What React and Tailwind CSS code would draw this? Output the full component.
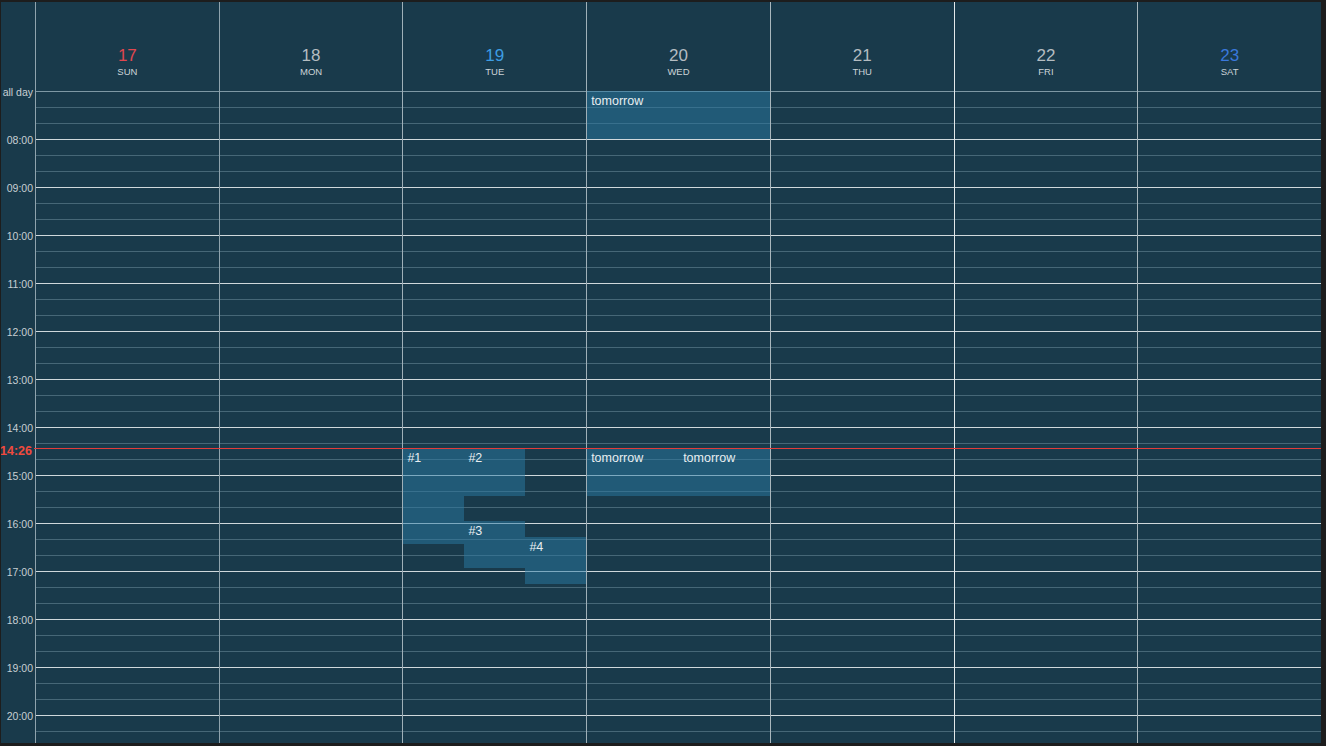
import React from "react";

const days = [
  { n: "17", d: "SUN", c: "text-[#e0474f]", b: "border-[#8fa3ad]" },
  { n: "18", d: "MON", c: "text-[#b4bcc1]", b: "border-[#8fa3ad]" },
  { n: "19", d: "TUE", c: "text-[#3d9de3]", b: "border-[#9fb0b8]" },
  { n: "20", d: "WED", c: "text-[#b4bcc1]", b: "border-[#9fb0b8]" },
  { n: "21", d: "THU", c: "text-[#b4bcc1]", b: "border-[#a9b7bd]" },
  { n: "22", d: "FRI", c: "text-[#b4bcc1]", b: "border-[#e2e8ea]" },
  { n: "23", d: "SAT", c: "text-[#3a78dc]", b: "border-[#a9b7bd]" },
];

const labels = ["all day", "08:00", "09:00", "10:00", "11:00", "12:00", "13:00", "14:00", "15:00", "16:00", "17:00", "18:00", "19:00", "20:00"];

function Rows() {
  return (
    <div className="flex flex-col">
      {labels.map((l, i) => (
        <div
          key={l}
          className={
            "h-[48px] shrink-0 border-t " +
            (i === 0 ? "border-[#7e98a4]" : "border-[#cfd8dc]")
          }
        >
          <div className="h-[15px]" />
          <div className="h-[16px] border-t border-[#466777]" />
          <div className="h-[16px] border-t border-[#466777]" />
        </div>
      ))}
    </div>
  );
}

function Ev({ cls, label }) {
  return (
    <div className={"absolute bg-[rgba(41,121,164,0.5)] " + cls}>
      {label && (
        <div className="pl-[4px] pt-[3px] text-[12.5px] leading-[15px] text-[#e8eef1]">{label}</div>
      )}
    </div>
  );
}

export default function App() {
  return (
    <div
      className="w-[1326px] h-[746px] bg-[#1d1d1d] pt-[2px] pl-[1px] pr-[5px] pb-[3px] overflow-hidden"
      style={{ fontFamily: '"Liberation Sans", Arial, sans-serif' }}
    >
      <div className="relative w-full h-full bg-[#193a4b] overflow-hidden">
        <div className="grid grid-cols-[34px_repeat(7,1fr)] h-full">
          {/* time column */}
          <div className="flex flex-col">
            <div className="h-[89px] shrink-0" />
            {labels.map((l) => (
              <div key={l} className="h-[48px] shrink-0 relative">
                <div className="absolute right-[2px] -top-[6px] text-[10.5px] leading-[14px] text-[#c7cfd3] whitespace-nowrap">
                  {l}
                </div>
              </div>
            ))}
          </div>
          {days.map((day, idx) => (
            <div key={day.n} className={"flex flex-col border-l min-w-0 " + day.b}>
              <div className="h-[89px] shrink-0 flex flex-col items-center pt-[44px]">
                <div className={"text-[17px] leading-[20px] " + day.c}>{day.n}</div>
                <div className="text-[9.5px] leading-[12px] text-[#cbd3d7]">{day.d}</div>
              </div>
              <div className="relative">
                <Rows />
                {idx === 2 && (
                  <>
                    <Ev cls="left-0 w-[61px] top-[357px] h-[96px]" label="#1" />
                    <Ev cls="left-[61px] w-[61px] top-[357px] h-[48px]" label="#2" />
                    <Ev cls="left-[61px] w-[61px] top-[430px] h-[47px]" label="#3" />
                    <Ev cls="left-[122px] right-0 top-[446px] h-[47px]" label="#4" />
                  </>
                )}
                {idx === 3 && (
                  <>
                    <Ev cls="left-0 right-0 top-0 h-[48px]" label="tomorrow" />
                    <Ev cls="left-0 w-[92px] top-[357px] h-[48px]" label="tomorrow" />
                    <Ev cls="left-[92px] right-0 top-[357px] h-[48px]" label="tomorrow" />
                  </>
                )}
              </div>
            </div>
          ))}
        </div>
        {/* now indicator */}
        <div className="absolute left-[33px] right-0 top-[446px] h-[1px] bg-[#e23c3a]" />
        <div className="absolute left-[-1px] top-[442px] text-[12.5px] leading-[15px] font-bold text-[#f04a3e]">14:26</div>
      </div>
    </div>
  );
}
